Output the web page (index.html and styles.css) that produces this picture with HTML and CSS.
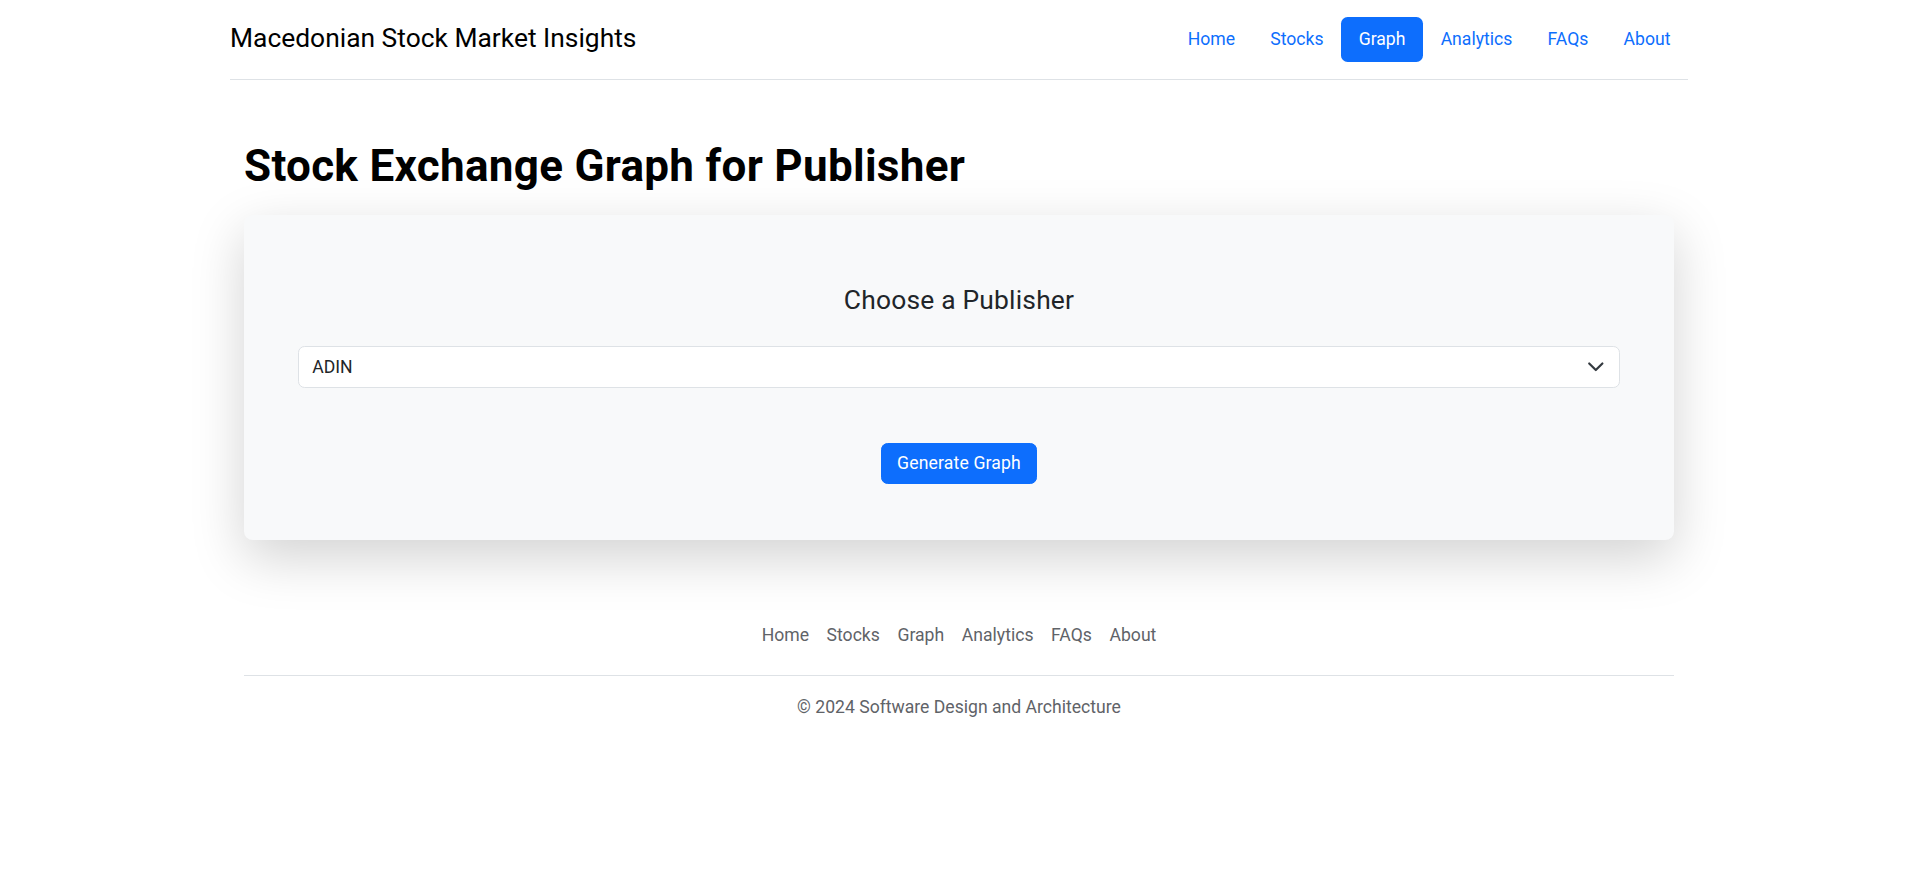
FILE: index.html
```html
<!DOCTYPE html>
<html lang="en">
<head>
<meta charset="utf-8">
<title>Macedonian Stock Market Insights</title>
<link rel="stylesheet" href="styles.css">
</head>
<body>
<div class="header-wrap">
  <header class="header">
    <a class="brand" href="#">Macedonian Stock Market Insights</a>
    <ul class="nav">
      <li><a class="nav-link" href="#">Home</a></li>
      <li><a class="nav-link" href="#">Stocks</a></li>
      <li><a class="nav-link active" href="#">Graph</a></li>
      <li><a class="nav-link" href="#">Analytics</a></li>
      <li><a class="nav-link" href="#">FAQs</a></li>
      <li><a class="nav-link" href="#">About</a></li>
    </ul>
  </header>
</div>

<main class="container main">
  <h1 class="page-title">Stock Exchange Graph for Publisher</h1>
  <section class="card">
    <h4 class="card-title">Choose a Publisher</h4>
    <div class="select-wrap">
      <select class="form-select">
        <option>ADIN</option>
      </select>
      <svg class="chevron" viewBox="0 0 16 16" width="17.6" height="17.6" aria-hidden="true">
        <path d="m2 5 6 6 6-6" fill="none" stroke="#343a40" stroke-width="2" stroke-linecap="round" stroke-linejoin="round"/>
      </svg>
    </div>
    <div class="actions">
      <button class="btn-primary" type="button">Generate Graph</button>
    </div>
  </section>
</main>

<footer class="container footer">
  <ul class="footer-nav">
    <li><a href="#">Home</a></li>
    <li><a href="#">Stocks</a></li>
    <li><a href="#">Graph</a></li>
    <li><a href="#">Analytics</a></li>
    <li><a href="#">FAQs</a></li>
    <li><a href="#">About</a></li>
  </ul>
  <p class="copyright">© 2024 Software Design and Architecture</p>
</footer>
</body>
</html>
```
FILE: styles.css
```css
* { box-sizing: border-box; }

body {
  margin: 0;
  font-family: Roboto, "Liberation Sans", sans-serif;
  font-size: 17.6px;
  line-height: 1.5;
  color: #212529;
  background: #fff;
}

a { text-decoration: none; }

.header-wrap {
  width: 1458px;
  margin: 0 auto;
  padding-bottom: 26.4px;
}

.header {
  display: flex;
  align-items: center;
  justify-content: space-between;
  padding: 16.6px 0 17.6px;
  border-bottom: 1px solid #dee2e6;
}

.brand {
  font-size: 26.4px;
  line-height: 1.5;
  color: #000;
}

.nav {
  display: flex;
  list-style: none;
  margin: 0;
  padding: 0;
}

.nav-link {
  display: block;
  padding: 9.6px 17.6px 9px;
  color: #0d6efd;
  border-radius: 6.6px;
}

.nav-link.active {
  background: #0d6efd;
  color: #fff;
}

.container {
  width: 1430px;
  margin: 0 auto;
}

.main {
  padding-top: 33px;
}

.page-title {
  margin: 0 0 22.6px;
  font-size: 44px;
  line-height: 1.2;
  font-weight: 700;
  letter-spacing: 0.3px;
  color: #000;
}

.card {
  background: #f8f9fa;
  border-radius: 8.8px;
  box-shadow: 0 17.6px 52.8px rgba(0, 0, 0, 0.175);
  padding: 53.6px 54px 56px;
}

.card-title {
  margin: 16px 0 30px;
  font-size: 26.4px;
  line-height: 1.2;
  font-weight: 400;
  text-align: center;
  letter-spacing: 0.2px;
}

.select-wrap {
  position: relative;
}

.form-select {
  display: block;
  width: 100%;
  height: 41.8px;
  padding: 6.6px 40px 6.6px 13.2px;
  font-family: inherit;
  font-size: 17.6px;
  line-height: 1.5;
  color: #212529;
  background: #fff;
  border: 1px solid #dee2e6;
  border-radius: 6.6px;
  appearance: none;
  -webkit-appearance: none;
}

.chevron {
  position: absolute;
  right: 15px;
  top: 12px;
  pointer-events: none;
}

.actions {
  display: flex;
  justify-content: center;
  margin-top: 54.7px;
}

.btn-primary {
  font-family: inherit;
  font-size: 17.6px;
  line-height: 1.5;
  padding: 6.6px 14.8px;
  color: #fff;
  background: #0d6efd;
  border: 1.1px solid #0d6efd;
  border-radius: 6.6px;
  letter-spacing: 0.15px;
}

.footer {
  margin-top: 73px;
}

.footer-nav {
  display: flex;
  justify-content: center;
  list-style: none;
  margin: 0 0 18px;
  padding: 0 0 18px;
  border-bottom: 1px solid #dee2e6;
}

.footer-nav a {
  display: block;
  padding: 8.8px 8.8px;
  color: #5f6368;
}

.copyright {
  margin: 0;
  text-align: center;
  color: #5f6368;
}
```
